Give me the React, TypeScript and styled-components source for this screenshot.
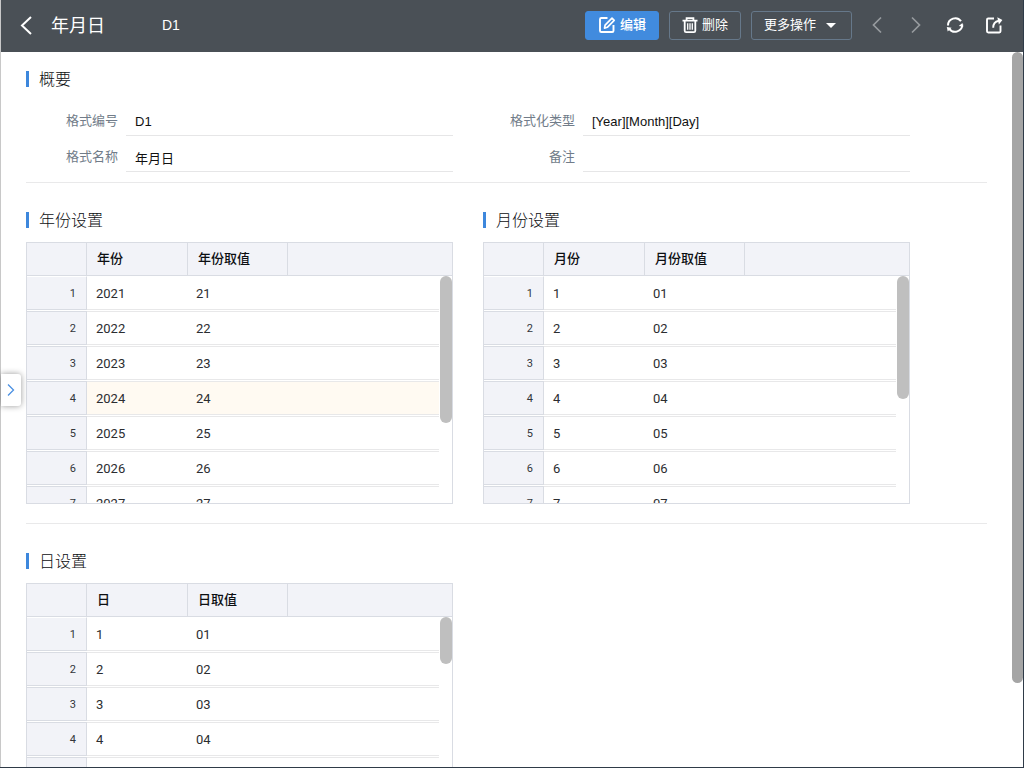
import React, { useId } from "react";
import styled, { createGlobalStyle, css } from "styled-components";

const GlobalStyle = createGlobalStyle`
  * {
    box-sizing: border-box;
  }
  body {
    margin: 0;
    overflow: hidden;
    background: #fff;
    color: #1c1f24;
    font: 13px/20px "Liberation Sans", "Noto Sans CJK SC", sans-serif;
  }
  button, input {
    font: inherit;
  }
`;

const line = "#d9dce3";
const softLine = "#e8e8e9";
const blue = "#3d87dc";

const Page = styled.div`
  position: relative;
  display: flex;
  flex-direction: column;
  height: 100vh;
  border: solid #2f3b48;
  border-width: 0 1px 1px 0;
  box-shadow: inset 1px 0 #c8c8c8;
  padding-left: 1px;
`;

const TopBar = styled.header`
  display: flex;
  align-items: center;
  flex: none;
  height: 52px;
  padding: 0 17px 2px 13px;
  background: #4a5056;
  color: #fff;
`;

const IconButton = styled.button<{ $dim?: boolean }>`
  display: flex;
  align-items: center;
  justify-content: center;
  width: 24px;
  height: 28px;
  padding: 0;
  border: 0;
  background: none;
  color: ${(p) => (p.$dim ? "#979b9e" : "#fff")};
`;

const Title = styled.h1`
  margin: 0 57px 0 13px;
  padding-top: 2px;
  font-size: 18px;
  line-height: 28px;
  font-weight: 400;
`;

const Code = styled.span`
  font-size: 14px;
`;

const Actions = styled.div`
  display: flex;
  gap: 10px;
  margin: 0 13px 0 auto;
`;

const ActionButton = styled.button<{ $primary?: boolean }>`
  display: flex;
  align-items: center;
  gap: 4px;
  height: 29px;
  padding: 0 12px;
  border: 1px solid ${(p) => (p.$primary ? "#418bde" : "#66788a")};
  border-radius: 3px;
  background: ${(p) => (p.$primary ? "#418bde" : "transparent")};
  color: #fff;
  font-weight: ${(p) => (p.$primary ? 500 : 400)};
  white-space: nowrap;
`;

const Caret = styled.span`
  margin: 0 3px 0 6px;
  border: 5px solid transparent;
  border-top-color: #fff;
  border-bottom-width: 0;
`;

const Nav = styled.nav`
  display: flex;
  gap: 15px;
`;

const Content = styled.main`
  flex: 1;
  min-height: 0;
  overflow: hidden;
  padding: 19px 36px 0 25px;
`;

const Section = styled.section`
  & + & {
    padding-top: 29px;
  }
`;

const Columns = styled.div`
  display: grid;
  grid-template-columns: 1fr 1fr;
  column-gap: 30px;
  padding-right: 77px;
`;

const Divider = styled.hr<{ $gap: number }>`
  height: 1px;
  margin: ${(p) => p.$gap}px 0 0;
  border: 0;
  background: #e9e9ea;
`;

const Heading = styled.h2`
  display: flex;
  align-items: center;
  gap: 10px;
  margin: 0;
  height: 16px;
  font-size: 16px;
  line-height: 18px;
  font-weight: 300;
  color: #0c0e11;

  &::before {
    content: "";
    width: 3px;
    height: 16px;
    background: ${blue};
  }
`;

const HeadingText = styled.span`
  padding-top: 2px;
`;

const Fields = styled(Columns)`
  margin-top: 13px;
`;

const Field = styled.div`
  display: flex;
  align-items: flex-end;
  height: 36px;
`;

const FieldLabel = styled.label`
  flex: none;
  width: 100px;
  padding: 0 8px 5px 0;
  color: #717c89;
  text-align: right;
`;

const FieldInput = styled.input`
  flex: 1;
  min-width: 0;
  height: 29px;
  padding: 0 9px;
  border: 0;
  border-bottom: 1px solid #e6e6e7;
  outline: 0;
  background: none;
  color: #111;
`;

const Grid = styled.div`
  position: relative;
  height: 262px;
  margin-top: 14px;
  overflow: hidden;
  border: 1px solid ${line};
`;

const Table = styled.table`
  display: block;
`;

const rowLayout = css`
  display: grid;
  grid-template-columns: 60px 100px 1fr;
`;

const Head = styled.thead`
  display: block;
  border-bottom: 1px solid ${line};
  background: #f2f3f8;

  tr {
    ${rowLayout}
    grid-template-columns: 60px 101px 100px 1fr;
    height: 32px;
  }
`;

const HeadCell = styled.th`
  padding: 6px 10px;
  border-right: 1px solid ${line};
  color: #0d0f12;
  font-weight: 500;
  text-align: left;

  &:last-child {
    border-right: 0;
  }
`;

const Body = styled.tbody`
  display: block;
  margin-right: 13px;
`;

const Row = styled.tr<{ $active?: boolean }>`
  ${rowLayout}
  height: 35px;
  padding-bottom: 1px;

  td {
    background: ${(p) => (p.$active ? "#fffaf2" : "#fff")};
  }
  &:first-child > * {
    border-top-color: #fff;
  }
`;

const RowNumber = styled.th`
  padding: 7px 10px 5px;
  border: 1px solid ${line};
  border-left: 0;
  background: #f2f3f8;
  color: #33363a;
  font: 400 11px/20px Roboto, sans-serif;
  text-align: right;
`;

const Cell = styled.td`
  padding: 7px 9px 5px;
  border: solid ${softLine};
  border-width: 1px 0;
  color: #2b2d30;
  font: 400 13px/20px Roboto, sans-serif;
`;

const TableThumb = styled.div<{ $length: number }>`
  position: absolute;
  top: 33px;
  right: 0;
  width: 12px;
  height: ${(p) => p.$length}px;
  border-radius: 6px;
  background: #bfbfbf;
`;

const PageThumb = styled.div`
  position: absolute;
  top: 52px;
  right: 0;
  width: 11px;
  height: 631px;
  border-radius: 6px;
  background: #a5a5a5;
`;

const DrawerTab = styled.button`
  position: absolute;
  top: 374px;
  left: 1px;
  display: flex;
  align-items: center;
  justify-content: center;
  width: 20px;
  height: 32px;
  padding: 0;
  border: 0;
  border-radius: 0 3px 3px 0;
  background: #fff;
  box-shadow: 0 0 6px rgba(0, 0, 0, 0.4);
  color: #4a90e2;
`;

const Stroke = styled.svg`
  display: block;
  flex: none;
  fill: none;
  stroke: currentColor;
`;

const EditIcon = () => (
  <Stroke width="18" height="18" viewBox="0 0 18 18" strokeWidth="1.9">
    <path d="M9.500 2H3.300Q2 2 2 3.300V14.700Q2 16 3.300 16H14.200Q15.500 16 15.500 14.700V9" />
    <path d="M6.500 12.100L7.100 9.100L14 2.200L16.200 4.400L9.300 11.300L6.500 12.100Z" strokeWidth="1.700" strokeLinejoin="round" />
  </Stroke>
);

const TrashIcon = () => (
  <Stroke width="16" height="18" viewBox="0 0 16 18" strokeWidth="1.8">
    <path d="M0.500 4.700H15.500M4.600 4.500V2.200H11.400V4.500M2.700 4.700V14.800Q2.700 16.200 4.100 16.200H11.900Q13.300 16.200 13.300 14.800V4.700" />
    <path d="M5.700 7.200V13.800M8 7.200V13.800M10.300 7.200V13.800" strokeWidth="1.300" />
  </Stroke>
);

const BackIcon = () => (
  <Stroke width="14" height="20" viewBox="0 0 14 20" strokeWidth="2">
    <path d="M12 2L3 10.500L12 19" />
  </Stroke>
);

const PrevIcon = () => (
  <Stroke width="12" height="18" viewBox="0 0 12 18" strokeWidth="1.7">
    <path d="M10 1.500L2.500 9L10 16.500" />
  </Stroke>
);

const NextIcon = () => (
  <Stroke width="12" height="18" viewBox="0 0 12 18" strokeWidth="1.7">
    <path d="M2 1.500L9.500 9L2 16.500" />
  </Stroke>
);

const RefreshIcon = () => (
  <Stroke width="18" height="18" viewBox="0 0 18 18" strokeWidth="2">
    <path d="M2 9.500A7.200 7.200 0 0 1 15 5.200M16.300 8.500A7.200 7.200 0 0 1 3.300 12.800" />
    <path d="M17.300 10.800L12.800 9.900L16.400 6.900ZM0.800 11.100L5.600 11.800L1.700 15.400Z" fill="currentColor" stroke="none" />
  </Stroke>
);

const ShareIcon = () => (
  <Stroke width="18" height="18" viewBox="0 0 18 18" strokeWidth="1.9">
    <path d="M9 2.500H3.200Q2 2.500 2 3.700V15.300Q2 16.500 3.200 16.500H14.300Q15.500 16.500 15.500 15.300V9.500" />
    <path d="M8.200 11.800Q8 6 13.800 4.700" />
    <path d="M12.300 1.200L17.400 3.900L13.900 8.400Z" fill="currentColor" stroke="none" />
  </Stroke>
);

const DrawerIcon = () => (
  <Stroke width="8" height="14" viewBox="0 0 8 14" strokeWidth="1.3">
    <path d="M1 1.500L6.500 7L1 12.500" />
  </Stroke>
);

const FormField = ({ label, value }: { label: string; value: string }) => {
  const id = useId();
  return (
    <Field>
      <FieldLabel htmlFor={id}>{label}</FieldLabel>
      <FieldInput id={id} type="text" value={value} readOnly />
    </Field>
  );
};

type GridProps = {
  title: string;
  columns: [string, string];
  rows: [string, string][];
  thumb: number;
  active?: number;
};

const DataSection = ({ title, columns, rows, thumb, active }: GridProps) => (
  <div>
    <Heading>
      <HeadingText>{title}</HeadingText>
    </Heading>
    <Grid>
      <Table aria-label={title}>
        <Head>
          <tr>
            <HeadCell as="td" />
            <HeadCell scope="col">{columns[0]}</HeadCell>
            <HeadCell scope="col">{columns[1]}</HeadCell>
            <HeadCell as="td" />
          </tr>
        </Head>
        <Body>
          {rows.map(([a, b], i) => (
            <Row key={a} $active={active === i}>
              <RowNumber scope="row">{i + 1}</RowNumber>
              <Cell>{a}</Cell>
              <Cell>{b}</Cell>
            </Row>
          ))}
        </Body>
      </Table>
      <TableThumb $length={thumb} />
    </Grid>
  </div>
);

const pad = (n: number) => String(n).padStart(2, "0");
const series = (count: number, first = 1): [string, string][] =>
  Array.from({ length: count }, (_, i) => [String(first + i), pad((first + i) % 100)]);

const years = series(7, 2021);
const months = series(7);
const days = series(5);

export default function App() {
  return (
    <>
      <GlobalStyle />
      <Page>
        <TopBar>
          <IconButton aria-label="返回">
            <BackIcon />
          </IconButton>
          <Title>年月日</Title>
          <Code>D1</Code>
          <Actions>
            <ActionButton $primary>
              <EditIcon />
              编辑
            </ActionButton>
            <ActionButton>
              <TrashIcon />
              删除
            </ActionButton>
            <ActionButton aria-haspopup="menu">
              更多操作
              <Caret />
            </ActionButton>
          </Actions>
          <Nav>
            <IconButton $dim aria-label="上一条">
              <PrevIcon />
            </IconButton>
            <IconButton $dim aria-label="下一条">
              <NextIcon />
            </IconButton>
            <IconButton aria-label="刷新">
              <RefreshIcon />
            </IconButton>
            <IconButton aria-label="分享">
              <ShareIcon />
            </IconButton>
          </Nav>
        </TopBar>
        <Content>
          <Section>
            <Heading>
              <HeadingText>概要</HeadingText>
            </Heading>
            <Fields>
              <FormField label="格式编号" value="D1" />
              <FormField label="格式化类型" value="[Year][Month][Day]" />
              <FormField label="格式名称" value="年月日" />
              <FormField label="备注" value="" />
            </Fields>
            <Divider $gap={10} />
          </Section>
          <Section>
            <Columns>
              <DataSection title="年份设置" columns={["年份", "年份取值"]} rows={years} thumb={147} active={3} />
              <DataSection title="月份设置" columns={["月份", "月份取值"]} rows={months} thumb={123} />
            </Columns>
            <Divider $gap={19} />
          </Section>
          <Section>
            <Columns>
              <DataSection title="日设置" columns={["日", "日取值"]} rows={days} thumb={47} />
            </Columns>
          </Section>
        </Content>
        <PageThumb />
        <DrawerTab aria-label="展开">
          <DrawerIcon />
        </DrawerTab>
      </Page>
    </>
  );
}
